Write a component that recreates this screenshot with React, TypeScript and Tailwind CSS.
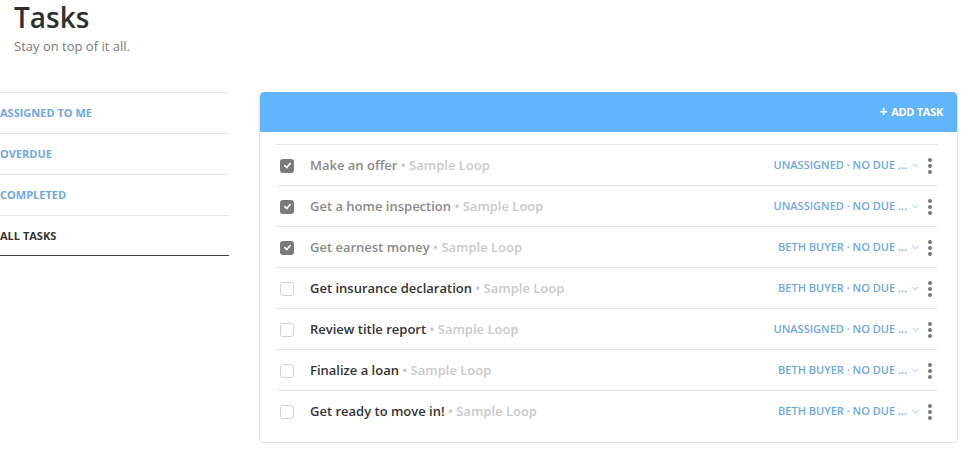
import { ChevronDown } from "lucide-react"

interface Task {
  title: string
  done: boolean
  assignee: string
}

const tasks: Task[] = [
  { title: "Make an offer", done: true, assignee: "UNASSIGNED" },
  { title: "Get a home inspection", done: true, assignee: "UNASSIGNED" },
  { title: "Get earnest money", done: true, assignee: "BETH BUYER" },
  { title: "Get insurance declaration", done: false, assignee: "BETH BUYER" },
  { title: "Review title report", done: false, assignee: "UNASSIGNED" },
  { title: "Finalize a loan", done: false, assignee: "BETH BUYER" },
  { title: "Get ready to move in!", done: false, assignee: "BETH BUYER" },
]

const navItems = ["ASSIGNED TO ME", "OVERDUE", "COMPLETED", "ALL TASKS"]

function Checkbox({ checked }: { checked: boolean }) {
  if (checked) {
    return (
      <span className="w-[14px] h-[14px] rounded-[3px] bg-[#7a7a7a] flex items-center justify-center shrink-0">
        <svg width="9" height="9" viewBox="0 0 10 10" fill="none">
          <path d="M2 5.2 L4.2 7.3 L8 2.8" stroke="white" strokeWidth="1.8" strokeLinecap="round" strokeLinejoin="round" />
        </svg>
      </span>
    )
  }
  return <span className="w-[14px] h-[14px] rounded-[3px] border border-[#d2d2d2] bg-white shrink-0" />
}

function Kebab() {
  return (
    <span className="flex flex-col items-center gap-[2px] w-[6px]">
      <span className="w-[4px] h-[4px] rounded-full bg-[#777]" />
      <span className="w-[4px] h-[4px] rounded-full bg-[#777]" />
      <span className="w-[4px] h-[4px] rounded-full bg-[#777]" />
    </span>
  )
}

export default function App() {
  return (
    <div className="w-[963px] h-[450px] bg-white overflow-hidden text-[#333]" style={{ fontFamily: '"Open Sans", sans-serif' }}>
      <div className="pl-[14px] pt-[2px]">
        <h1 className="text-[28px] leading-[30px] font-semibold text-[#2f2f2f]">Tasks</h1>
        <p className="text-[13px] leading-[20px] text-[#7b7b7b] mt-[4px]">Stay on top of it all.</p>
      </div>

      <div className="flex mt-[36px]">
        <nav className="w-[229px] shrink-0">
          {navItems.map((item, i) => {
            const active = i === navItems.length - 1
            return (
              <div
                key={item}
                className={`h-[41px] border-t border-[#e6e6e6] flex items-center pt-px text-[11px] font-bold ${
                  active ? "text-[#333] border-b border-b-[#444]" : "text-[#6ea8de]"
                }`}
              >
                {item}
              </div>
            )
          })}
        </nav>

        <div className="ml-[30px] w-[699px] h-[351px] border border-t-0 border-[#e3e3e3] rounded-[5px] overflow-hidden">
          <div className="h-[40px] bg-[#62b4fd] flex items-center justify-end pr-[14px]">
            <span className="text-white text-[11px] font-bold tracking-tight flex items-center gap-[4px]">
              <span className="text-[14px] leading-none font-bold">+</span>
              ADD TASK
            </span>
          </div>
          <div className="pt-[12px] pl-[16px] pr-[19px]">
            {tasks.map(t => (
              <div key={t.title} className="h-[41px] border-t border-[#e6e6e6] flex items-center pt-px pl-[4px] pr-[5px]">
                <Checkbox checked={t.done} />
                <span className="ml-[16px] text-[13px] font-semibold">
                  <span className={t.done ? "text-[#8a8a8a]" : "text-[#333]"}>{t.title}</span>
                  <span className="text-[#c9c9c9]"> • Sample Loop</span>
                </span>
                <span className="ml-auto flex items-center text-[11px] font-semibold text-[#6ea8de]">
                  {t.assignee} · NO DUE ...
                  <ChevronDown size={11} strokeWidth={1.5} className="ml-[3px] text-[#6ea8de]" />
                </span>
                <span className="ml-[6px]">
                  <Kebab />
                </span>
              </div>
            ))}
          </div>
        </div>
      </div>
    </div>
  )
}
